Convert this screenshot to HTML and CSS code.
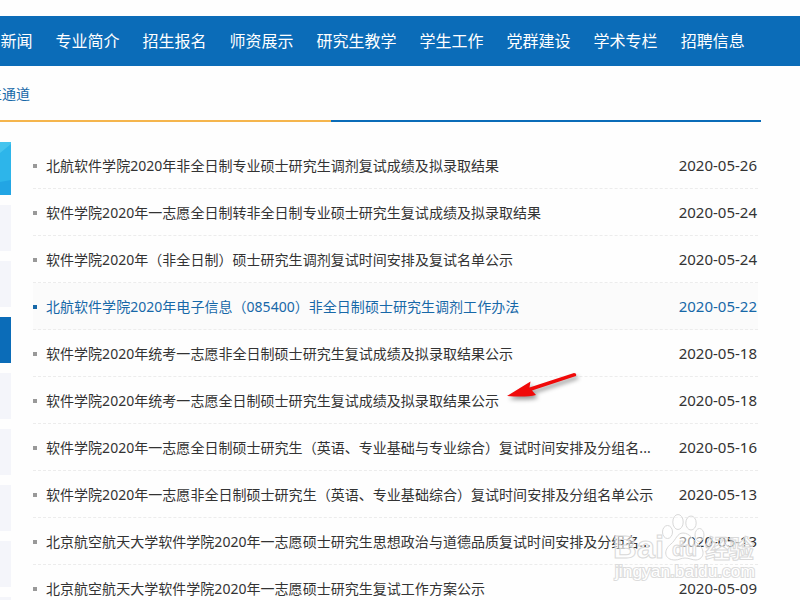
FILE: index.html
```
<!DOCTYPE html>
<html lang="zh-CN">
<head>
    <meta charset="UTF-8">
    <meta name="viewport" content="width=device-width, initial-scale=1.0">
    <title>北航软件学院 - 招生报名</title>
    <link rel="stylesheet" href="styles.css">
</head>
<body>
    <nav class="main-nav">
        <a>新闻</a>
        <a>专业简介</a>
        <a>招生报名</a>
        <a>师资展示</a>
        <a>研究生教学</a>
        <a>学生工作</a>
        <a>党群建设</a>
        <a>学术专栏</a>
        <a>招聘信息</a>
    </nav>

    <div class="crumb"><span>生通道</span></div>
    <div class="divider"></div>

    <div class="content">
        <div class="sidebar">
            <svg class="side-banner" viewBox="0 0 11 53">
                <rect width="11" height="53" fill="#2db5ea"/>
                <path d="M0 0H11V2L0 11Z" fill="#45c4ee"/>
                <path d="M0 40L11 38V53H0Z" fill="#22a5e4"/>
            </svg>
            <div class="side-item"></div>
            <div class="side-item"></div>
            <div class="side-item active"></div>
            <div class="side-item"></div>
            <div class="side-item"></div>
            <div class="side-item"></div>
            <div class="side-item"></div>
            <div class="side-item"></div>
        </div>

        <ul class="news-list">
            <li><a>北航软件学院2020年非全日制专业硕士研究生调剂复试成绩及拟录取结果</a><span class="date">2020-05-26</span></li>
            <li><a>软件学院2020年一志愿全日制转非全日制专业硕士研究生复试成绩及拟录取结果</a><span class="date">2020-05-24</span></li>
            <li><a>软件学院2020年<i lang="zh-TW">（</i>非全日制<i lang="zh-TW">）</i>硕士研究生调剂复试时间安排及复试名单公示</a><span class="date">2020-05-24</span></li>
            <li class="current"><a>北航软件学院2020年电子信息<i lang="zh-TW">（</i>085400<i lang="zh-TW">）</i>非全日制硕士研究生调剂工作办法</a><span class="date">2020-05-22</span></li>
            <li><a>软件学院2020年统考一志愿非全日制硕士研究生复试成绩及拟录取结果公示</a><span class="date">2020-05-18</span></li>
            <li><a>软件学院2020年统考一志愿全日制硕士研究生复试成绩及拟录取结果公示</a><span class="date">2020-05-18</span></li>
            <li><a>软件学院2020年一志愿全日制硕士研究生<i lang="zh-TW">（</i>英语、专业基础与专业综合<i lang="zh-TW">）</i>复试时间安排及分组名...</a><span class="date">2020-05-16</span></li>
            <li><a>软件学院2020年一志愿非全日制硕士研究生<i lang="zh-TW">（</i>英语、专业基础综合<i lang="zh-TW">）</i>复试时间安排及分组名单公示</a><span class="date">2020-05-13</span></li>
            <li><a>北京航空航天大学软件学院2020年一志愿硕士研究生思想政治与道德品质复试时间安排及分组名...</a><span class="date">2020-05-13</span></li>
            <li><a>北京航空航天大学软件学院2020年一志愿硕士研究生复试工作方案公示</a><span class="date">2020-05-09</span></li>
        </ul>
    </div>

    <svg class="arrow" viewBox="0 0 80 34">
        <path d="M5 26L28.5 11.5L27.5 17.5L72 3Q75 3 74 6L30 20.5L34 25Q24 27.5 5 26Z" fill="#f00a0a"/>
    </svg>

    <svg class="watermark" viewBox="0 0 150 75">
        <g class="wm-shape">
            <ellipse cx="59.5" cy="22" rx="5" ry="6.5"/>
            <ellipse cx="70" cy="12" rx="5.2" ry="7.5"/>
            <ellipse cx="83" cy="13" rx="5.2" ry="7"/>
            <ellipse cx="91.5" cy="25" rx="4.5" ry="6.5"/>
            <path d="M75 23C69 23 68 30 63 34C55 40 56 50 67 50C71 50 73 48 77 48C81 48 84 50 88 50C97 49 97 39 90 34C85 30 82 23 75 23Z"/>
        </g>
        <text class="wm-logo" x="5" y="48" textLength="51" lengthAdjust="spacingAndGlyphs">Bai</text>
        <text class="wm-du" x="64" y="46" textLength="25">du</text>
        <text class="wm-cn" x="97" y="48" textLength="49">经验</text>
        <text class="wm-url" x="7" y="67" textLength="140" lengthAdjust="spacingAndGlyphs">jingyan.baidu.com</text>
    </svg>
</body>
</html>
```
FILE: styles.css
```
* {
    box-sizing: border-box;
}

body {
    margin: 0;
    height: 600px;
    padding-top: 16px;
    position: relative;
    overflow: hidden;
    background: #fefefe;
    color: #333;
    font-family: 'Noto Sans', 'Noto Sans CJK SC', sans-serif;
    font-size: 14px;
}

.main-nav {
    display: flex;
    align-items: center;
    gap: 23px;
    height: 50px;
    padding: 0 0 2px 0.5px;
    background: #0b6cb8;
    color: #fff;
    font-size: 16px;
    white-space: nowrap;
}

.crumb {
    height: 54px;
    line-height: 56px;
    overflow: hidden;
    color: #1768a8;
}

.crumb span {
    margin-left: -12px;
}

.divider {
    width: 761px;
    height: 2px;
    background: linear-gradient(to right, #f5b54d 331px, #0b6cb8 331px);
}

.content {
    display: flex;
    gap: 22px;
    height: 458px;
    margin-top: 20px;
    overflow: hidden;
}

.sidebar {
    display: flex;
    flex-direction: column;
    flex-shrink: 0;
    gap: 10px;
    width: 11px;
}

.side-banner {
    display: block;
    flex-shrink: 0;
    width: 11px;
    height: 53px;
}

.side-item {
    flex-shrink: 0;
    height: 46px;
    background: #f4f5fa;
}

.side-item.active {
    background: #0b6cb8;
}

.news-list {
    width: 725px;
    margin: 0;
    padding: 0;
    list-style: none;
}

.news-list li {
    display: flex;
    align-items: center;
    height: 47px;
    padding-right: 1px;
    border-bottom: 1px dashed #ececec;
    white-space: nowrap;
}

.news-list li::before {
    content: '';
    width: 4px;
    height: 4px;
    margin: 2px 9px 0 0;
    background: #999;
}

.news-list a {
    letter-spacing: 0.03px;
}

/* centred full-width brackets */
.news-list i {
    font-family: 'Noto Sans CJK TC', sans-serif;
    font-style: normal;
    line-height: 1;
}

.news-list .date {
    margin-left: auto;
    font-size: 15px;
}

.news-list .current {
    background: #fbfbfb;
    color: #1768a8;
}

.news-list .current::before {
    background: #1768a8;
}

.arrow {
    position: absolute;
    left: 502px;
    top: 370px;
    width: 80px;
    height: 34px;
    overflow: visible;
    filter: drop-shadow(2px 3px 2px rgba(0, 0, 0, 0.4));
}

/* watermark */
.watermark {
    position: absolute;
    left: 608px;
    top: 510px;
    width: 150px;
    height: 75px;
}

.wm-shape,
.watermark text {
    fill: rgba(255, 255, 255, 0.5);
    stroke: #d9d9d9;
    stroke-width: 1px;
}

.wm-logo {
    font: bold 32px 'Liberation Sans', sans-serif;
}

.wm-du {
    font: bold 20px 'Liberation Sans', sans-serif;
}

.wm-cn {
    font: bold 25px 'Noto Sans CJK SC', sans-serif;
}

.watermark .wm-url {
    font: 16px 'Liberation Sans', sans-serif;
    fill: #fff;
    stroke: #dcdcdc;
    stroke-width: 2px;
    paint-order: stroke;
}
```
